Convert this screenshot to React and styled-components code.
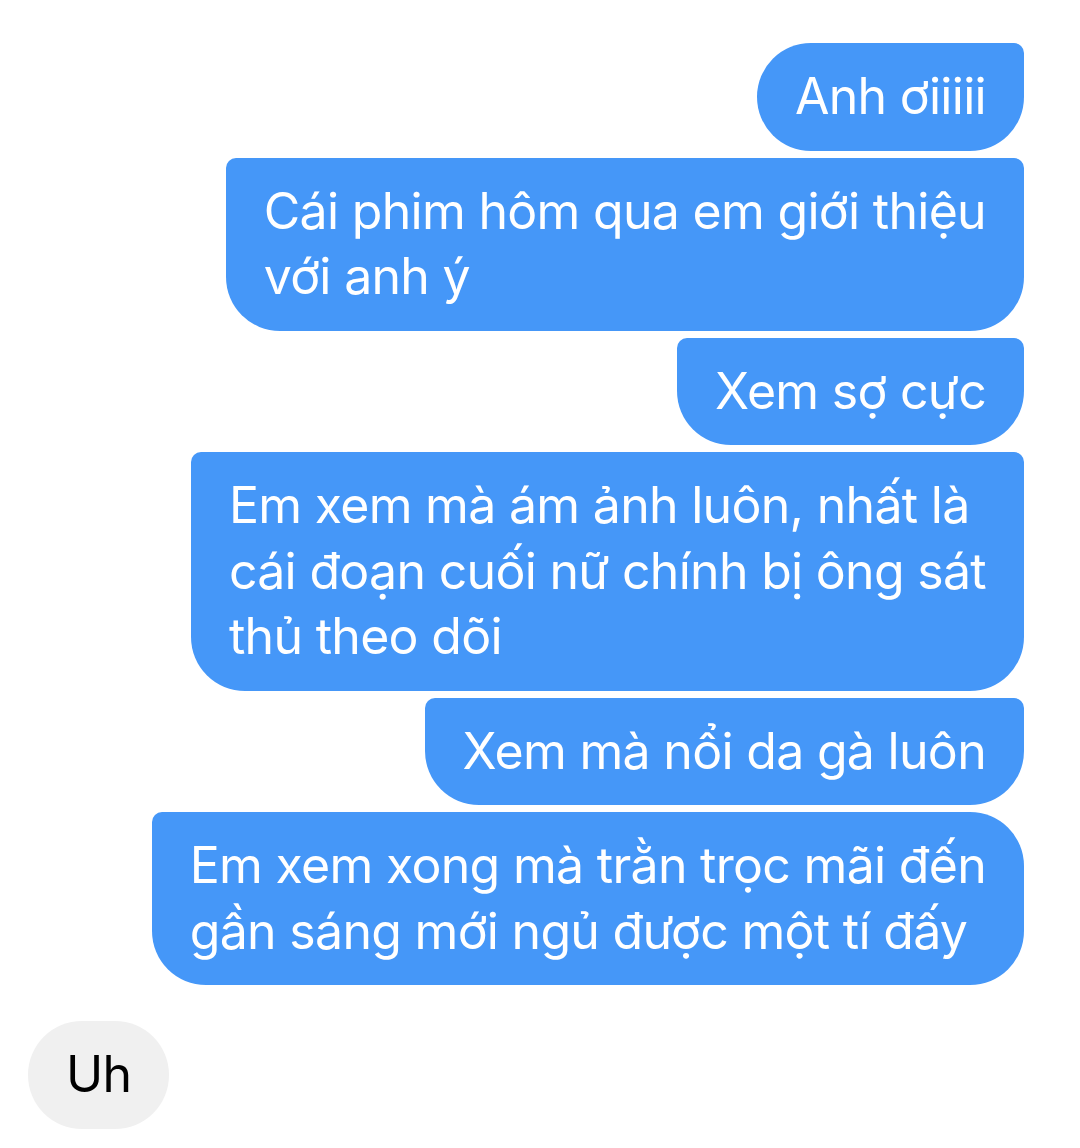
import React from 'react';
import styled, { createGlobalStyle } from 'styled-components';

const Global = createGlobalStyle`
  html, body { margin: 0; padding: 0; background: #fff; }
  body { font-family: Inter, "Noto Sans", "Liberation Sans", sans-serif; }
`;

const Thread = styled.div`
  width: 1080px;
  padding: 43px 56px 20px 28px;
  box-sizing: border-box;
  display: flex;
  flex-direction: column;
`;

const Group = styled.div`
  display: flex;
  flex-direction: column;
  align-items: ${p => (p.$mine ? 'flex-end' : 'flex-start')};
  gap: 7px;
  & + & { margin-top: 36px; }
`;

const BIG = '54px';
const SMALL = '10px';

const Bubble = styled.div`
  background: ${p => (p.$mine ? '#4597F8' : '#F0F0F0')};
  color: ${p => (p.$mine ? '#fff' : '#000')};
  font-size: 50px;
  letter-spacing: -0.7px;
  line-height: 65.5px;
  padding: 21px 38px;
  white-space: nowrap;
  border-radius: ${p => `${p.$top} ${p.$bottom} ${BIG} ${BIG}`};
`;

const messages = [
  ['Anh ơiiiii'],
  ['Cái phim hôm qua em giới thiệu', 'với anh ý'],
  ['Xem sợ cực'],
  ['Em xem mà ám ảnh luôn, nhất là', 'cái đoạn cuối nữ chính bị ông sát', 'thủ theo dõi'],
  ['Xem mà nổi da gà luôn'],
  ['Em xem xong mà trằn trọc mãi đến', 'gần sáng mới ngủ được một tí đấy'],
];

export default function App() {
  return (
    <>
      <Global />
      <Thread>
        <Group $mine>
          {messages.map((lines, i) => (
            <Bubble
              key={i}
              $mine
              $top={i === 0 ? BIG : SMALL}
              $bottom={i === messages.length - 1 ? BIG : SMALL}
            >
              {lines.map((l, j) => (
                <div key={j}>{l}</div>
              ))}
            </Bubble>
          ))}
        </Group>
        <Group>
          <Bubble $top={BIG} $bottom={BIG}>Uh</Bubble>
        </Group>
      </Thread>
    </>
  );
}
